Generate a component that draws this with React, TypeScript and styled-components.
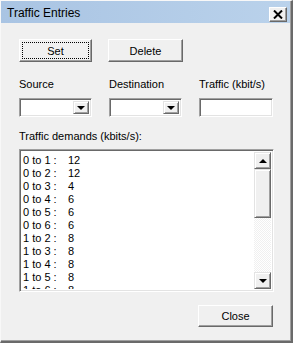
import React from "react";
import styled, { createGlobalStyle } from "styled-components";

// 데이터
const demands = [
  ["0 to 1", 12],
  ["0 to 2", 12],
  ["0 to 3", 4],
  ["0 to 4", 6],
  ["0 to 5", 6],
  ["0 to 6", 6],
  ["1 to 2", 8],
  ["1 to 3", 8],
  ["1 to 4", 8],
  ["1 to 5", 8],
  ["1 to 6", 8],
];

export default function App() {
  return (
    <>
      <GlobalStyle />
      <Window>
        <TitleBar>
          <Title>Traffic Entries</Title>
          <CloseX>
            <svg width="10" height="9" viewBox="0 0 10 9">
              <path d="M1 0.5 L9 8.5 M9 0.5 L1 8.5" stroke="#000" strokeWidth="2" />
            </svg>
          </CloseX>
        </TitleBar>
        <Body>
          <ButtonRow>
            <Button>
              <Focus>Set</Focus>
            </Button>
            <Button $width={75}>Delete</Button>
          </ButtonRow>
          <Fields>
            <Label>Source</Label>
            <Label>Destination</Label>
            <Label>Traffic (kbit/s)</Label>
            <Combo>
              <DropBtn>
                <Arrow $down />
              </DropBtn>
            </Combo>
            <Combo>
              <DropBtn>
                <Arrow $down />
              </DropBtn>
            </Combo>
            <TextBox />
          </Fields>
          <ListLabel>Traffic demands (kbits/s):</ListLabel>
          <ListBox>
            <Items>
              {demands.map(([pair, v]) => (
                <Item key={pair as string}>
                  <Pair>{pair} :</Pair>
                  <span>{v}</span>
                </Item>
              ))}
            </Items>
            <ScrollBar>
              <ScrollBtn>
                <Arrow />
              </ScrollBtn>
              <Thumb />
              <Track />
              <ScrollBtn>
                <Arrow $down />
              </ScrollBtn>
            </ScrollBar>
          </ListBox>
          <Footer>
            <Button $width={75} $height={22}>Close</Button>
          </Footer>
        </Body>
      </Window>
    </>
  );
}

// Styled Components
const GlobalStyle = createGlobalStyle`
  html, body {
    margin: 0;
    padding: 0;
    background: #f0f0f0;
  }
  * {
    box-sizing: border-box;
  }
`;

const Window = styled.div`
  width: 293px;
  height: 343px;
  background: #f0f0f0;
  border-top: 1px solid #f8f8f8;
  border-left: 1px solid #f8f8f8;
  border-right: 2px solid #6a6a6a;
  border-bottom: 2px solid #6a6a6a;
  box-shadow: inset -1px -1px 0 #a0a0a0;
  font-family: Tahoma, "Liberation Sans", sans-serif;
  font-size: 11px;
  color: #000;
  overflow: hidden;
`;

const TitleBar = styled.div`
  height: 22px;
  margin: 0 1px 0 0;
  background: linear-gradient(to right, #a9c4e3, #bad2eb);
  display: flex;
  align-items: center;
  justify-content: space-between;
  padding: 0 3px 0 6px;
`;

const Title = styled.div`
  font-size: 12px;
  color: #000;
  padding-top: 1px;
`;

const CloseX = styled.div`
  width: 18px;
  height: 15px;
  margin-top: 5px;
  background: #f0f0f0;
  border-top: 1px solid #fff;
  border-left: 1px solid #fff;
  border-right: 1px solid #696969;
  border-bottom: 1px solid #696969;
  box-shadow: inset -1px -1px 0 #a0a0a0;
  display: flex;
  align-items: center;
  justify-content: center;
`;

const Body = styled.div`
  padding: 16px 0 0 17px;
  display: flex;
  flex-direction: column;
`;

const ButtonRow = styled.div`
  display: flex;
  gap: 16px;
  padding-left: 1px;
`;

const Button = styled.div<{ $width?: number; $height?: number }>`
  width: ${(p) => p.$width || 73}px;
  height: ${(p) => p.$height || 23}px;
  background: #f0f0f0;
  border-top: 1px solid #fff;
  border-left: 1px solid #fff;
  border-right: 1px solid #696969;
  border-bottom: 1px solid #696969;
  box-shadow: inset -1px -1px 0 #a0a0a0;
  display: flex;
  align-items: center;
  justify-content: center;
  padding: 2px;
`;

const Focus = styled.div`
  width: 100%;
  height: 100%;
  border: 1px dotted #000;
  display: flex;
  align-items: center;
  justify-content: center;
`;

const Fields = styled.div`
  display: grid;
  grid-template-columns: 73px 73px 74px;
  column-gap: 17px;
  row-gap: 7px;
  margin-top: 16px;
  padding-left: 1px;
`;

const Label = styled.div`
  font-size: 11px;
  line-height: 13px;
`;

const Sunken = styled.div`
  height: 19px;
  background: #fff;
  border-top: 1px solid #a0a0a0;
  border-left: 1px solid #a0a0a0;
  border-right: 1px solid #fff;
  border-bottom: 1px solid #fff;
  box-shadow: inset 1px 1px 0 #696969, inset -1px -1px 0 #e3e3e3;
`;

const Combo = styled(Sunken)`
  display: flex;
  justify-content: flex-end;
  padding: 2px;
`;

const TextBox = styled(Sunken)``;

const DropBtn = styled.div`
  width: 16px;
  height: 100%;
  background: #f0f0f0;
  border-top: 1px solid #e3e3e3;
  border-left: 1px solid #e3e3e3;
  border-right: 1px solid #696969;
  border-bottom: 1px solid #696969;
  box-shadow: inset 1px 1px 0 #fff, inset -1px -1px 0 #a0a0a0;
  display: flex;
  align-items: center;
  justify-content: center;
`;

const Arrow = styled.div<{ $down?: boolean }>`
  width: 0;
  height: 0;
  border-left: 4px solid transparent;
  border-right: 4px solid transparent;
  ${(p) =>
    p.$down ? "border-top: 4px solid #000;" : "border-bottom: 4px solid #000;"}
`;

const ListLabel = styled.div`
  margin-top: 13px;
  padding-left: 1px;
  line-height: 13px;
`;

const ListBox = styled.div`
  margin-top: 6px;
  margin-left: 1px;
  width: 255px;
  height: 143px;
  background: #fff;
  border-top: 1px solid #a0a0a0;
  border-left: 1px solid #a0a0a0;
  border-right: 1px solid #fff;
  border-bottom: 1px solid #fff;
  box-shadow: inset 1px 1px 0 #696969, inset -1px -1px 0 #e3e3e3;
  padding: 2px;
  display: flex;
  overflow: hidden;
`;

const Items = styled.div`
  flex: 1;
  padding: 2px 0 0 1px;
  overflow: hidden;
`;

const Item = styled.div`
  display: flex;
  height: 13px;
  line-height: 13px;
  font-size: 11px;
  white-space: pre;
`;

const Pair = styled.span`
  width: 45px;
`;

const ScrollBar = styled.div`
  width: 17px;
  display: flex;
  flex-direction: column;
`;

const ScrollBtn = styled.div`
  height: 17px;
  background: #f0f0f0;
  border-top: 1px solid #e3e3e3;
  border-left: 1px solid #e3e3e3;
  border-right: 1px solid #696969;
  border-bottom: 1px solid #696969;
  box-shadow: inset 1px 1px 0 #fff, inset -1px -1px 0 #a0a0a0;
  display: flex;
  align-items: center;
  justify-content: center;
`;

const Thumb = styled(ScrollBtn)`
  height: 49px;
`;

const Track = styled.div`
  flex: 1;
  background-color: #f0f0f0;
  background-image: linear-gradient(45deg, #fff 25%, transparent 25%, transparent 75%, #fff 75%),
    linear-gradient(45deg, #fff 25%, transparent 25%, transparent 75%, #fff 75%);
  background-size: 2px 2px;
  background-position: 0 0, 1px 1px;
`;

const Footer = styled.div`
  display: flex;
  justify-content: flex-end;
  margin-top: 13px;
  padding-right: 18px;
`;
